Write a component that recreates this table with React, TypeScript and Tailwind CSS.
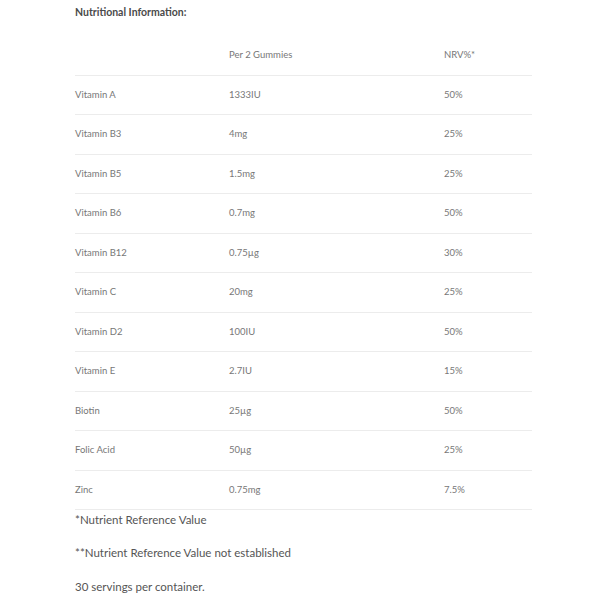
import React from "react";

const rows: [string, string, string][] = [
  ["Vitamin A", "1333IU", "50%"],
  ["Vitamin B3", "4mg", "25%"],
  ["Vitamin B5", "1.5mg", "25%"],
  ["Vitamin B6", "0.7mg", "50%"],
  ["Vitamin B12", "0.75µg", "30%"],
  ["Vitamin C", "20mg", "25%"],
  ["Vitamin D2", "100IU", "50%"],
  ["Vitamin E", "2.7IU", "15%"],
  ["Biotin", "25µg", "50%"],
  ["Folic Acid", "50µg", "25%"],
  ["Zinc", "0.75mg", "7.5%"],
];

function Row({ a, b, c }: { a: string; b: string; c: string }) {
  return (
    <div className="flex h-[39.5px] items-center border-b border-[#ececec] text-[9.5px] text-[#777]">
      <div className="w-[154px]">{a}</div>
      <div className="w-[215px]">{b}</div>
      <div>{c}</div>
    </div>
  );
}

export default function App() {
  return (
    <div
      className="w-[600px] h-[600px] bg-white pl-[75px]"
      style={{ fontFamily: "'Lato', 'Open Sans', sans-serif" }}
    >
      <div className="w-[457px]">
        <div className="h-[36px] pt-[5px] text-[10.5px] font-bold text-[#4a4a4a]">
          Nutritional Information:
        </div>
        <Row a="" b="Per 2 Gummies" c="NRV%*" />
        {rows.map(([a, b, c]) => (
          <Row key={a} a={a} b={b} c={c} />
        ))}
        <div className="text-[11.5px] text-[#555]">
          <div className="h-[20px] flex items-center">*Nutrient Reference Value</div>
          <div className="mt-[13px] h-[20px] flex items-center">**Nutrient Reference Value not established</div>
          <div className="mt-[14px] h-[20px] flex items-center">30 servings per container.</div>
        </div>
      </div>
    </div>
  );
}
